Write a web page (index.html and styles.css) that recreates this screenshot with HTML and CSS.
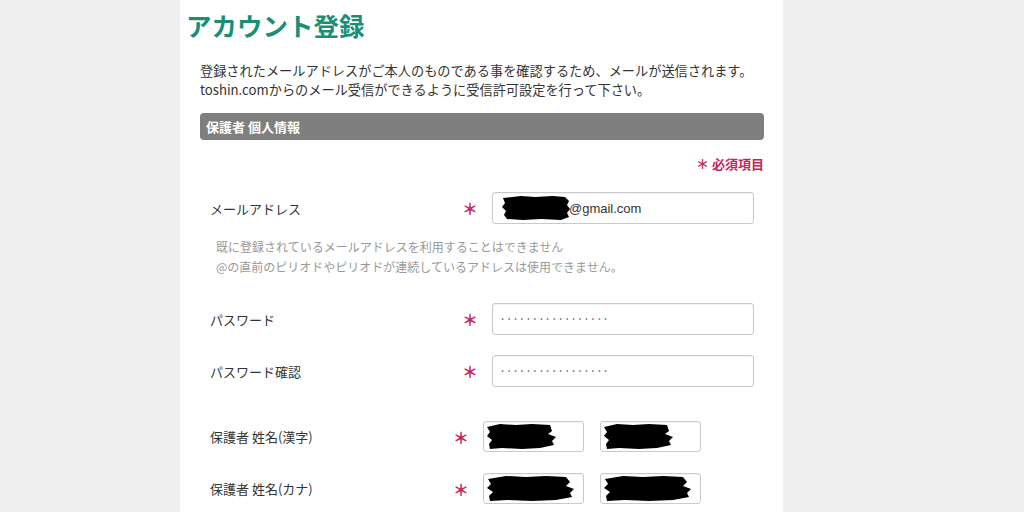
FILE: index.html
```html
<!DOCTYPE html>
<html lang="ja">
<head>
<meta charset="utf-8">
<link rel="stylesheet" href="styles.css">
</head>
<body>
<div class="page">
  <main class="card">
    <h1 class="title">アカウント登録</h1>
    <p class="intro">登録されたメールアドレスがご本人のものである事を確認するため、メールが送信されます。<br>toshin.comからのメール受信ができるように受信許可設定を行って下さい。</p>
    <div class="section-bar">保護者 個人情報</div>
    <div class="required-note">＊ 必須項目</div>

    <div class="row row-wide row-email">
      <div class="label">メールアドレス</div>
      <div class="mark">＊</div>
      <div class="field field-wide">
        <svg class="redact" width="70" height="26" viewBox="0 0 70 26"><path d="M2 3 L20 1 L34 2 L52 1 L64 2 L68 6 L66 10 L69 14 L66 18 L68 22 L60 25 L40 24 L22 25 L6 24 L3 20 L5 16 L1 12 L4 8 Z" fill="#000"/></svg>
        <span class="value">@gmail.com</span>
      </div>
    </div>
    <div class="help">既に登録されているメールアドレスを利用することはできません<br>@の直前のピリオドやピリオドが連続しているアドレスは使用できません。</div>

    <div class="row row-wide row-pass">
      <div class="label">パスワード</div>
      <div class="mark">＊</div>
      <div class="field field-wide"><span class="dots">•••••••••••••••••</span></div>
    </div>

    <div class="row row-wide row-pass2">
      <div class="label">パスワード確認</div>
      <div class="mark">＊</div>
      <div class="field field-wide"><span class="dots">•••••••••••••••••</span></div>
    </div>

    <div class="row row-name row-name1">
      <div class="label">保護者 姓名(漢字)</div>
      <div class="mark">＊</div>
      <div class="field field-half">
        <svg class="redact" width="74" height="27" viewBox="0 0 74 27"><path d="M1 4 L14 1 L30 2 L46 1 L64 2 L66 8 L62 11 L70 14 L66 18 L68 22 L54 25 L36 26 L16 25 L4 26 L3 21 L6 17 L1 13 L4 9 Z" fill="#000"/></svg>
      </div>
      <div class="field field-half">
        <svg class="redact" width="74" height="27" viewBox="0 0 74 27"><path d="M1 4 L14 1 L30 2 L46 1 L64 2 L66 8 L62 11 L70 14 L66 18 L68 22 L54 25 L36 26 L16 25 L4 26 L3 21 L6 17 L1 13 L4 9 Z" fill="#000"/></svg>
      </div>
    </div>

    <div class="row row-name row-name2">
      <div class="label">保護者 姓名(カナ)</div>
      <div class="mark">＊</div>
      <div class="field field-half">
        <svg class="redact" width="90" height="27" viewBox="0 0 90 27"><path d="M2 4 L20 1 L40 2 L60 1 L80 2 L84 7 L80 11 L88 14 L84 18 L86 22 L70 25 L46 26 L22 25 L4 26 L3 21 L7 17 L1 13 L5 9 Z" fill="#000"/></svg>
      </div>
      <div class="field field-half">
        <svg class="redact" width="90" height="27" viewBox="0 0 90 27"><path d="M2 4 L20 1 L40 2 L60 1 L80 2 L84 7 L80 11 L88 14 L84 18 L86 22 L70 25 L46 26 L22 25 L4 26 L3 21 L7 17 L1 13 L5 9 Z" fill="#000"/></svg>
      </div>
    </div>
  </main>
</div>
</body>
</html>
```

FILE: styles.css
```css
* { box-sizing: border-box; }
html, body { margin: 0; padding: 0; }
body {
  background: #efefef;
  font-family: "Noto Sans CJK JP", "Noto Sans", sans-serif;
  color: #333;
  height: 512px;
  overflow: hidden;
}
.page { display: flex; }
.card {
  margin-left: 180px;
  width: 603px;
  min-height: 512px;
  background: #fff;
  padding: 0 19px 0 20px;
}
.title {
  margin: 12px 0 0 -14px;
  font-size: 25.5px;
  line-height: 25px;
  font-weight: 700;
  color: #1b8f74;
}
.intro {
  margin: 24px 0 0;
  font-size: 13.2px;
  line-height: 19px;
  color: #333;
}
.section-bar {
  margin-top: 14px;
  height: 27px;
  background: #7f7f7f;
  border-radius: 4px;
  color: #fff;
  font-size: 13px;
  font-weight: 700;
  line-height: 27px;
  padding-left: 6px;
}
.required-note {
  margin-top: 15px;
  text-align: right;
  font-size: 13px;
  line-height: 18px;
  font-weight: 700;
  color: #c8235a;
}
.row {
  display: flex;
  align-items: center;
  padding-left: 10px;
}
.label {
  font-size: 13px;
  color: #333;
}
.mark {
  width: 30px;
  color: #c8235a;
  font-size: 16px;
  font-weight: 700;
}
.row-wide .label { width: 252px; }
.row-name .label { width: 243px; }
.field {
  height: 32px;
  border: 1px solid #c9c9c9;
  border-radius: 3px;
  background: #fff;
  box-shadow: inset 0 1px 1px rgba(0,0,0,0.05);
  display: flex;
  align-items: center;
  position: relative;
}
.field-wide { width: 262px; padding-left: 8px; }
.field-half { width: 101px; height: 31px; padding-left: 2px; }
.field-half + .field-half { margin-left: 16px; }
.redact { display: block; }
.value {
  font-family: "Liberation Sans", Arial, sans-serif;
  font-size: 13px;
  color: #333;
  margin-left: -2px;
}
.dots {
  font-family: "DejaVu Sans", sans-serif;
  font-size: 5.5px;
  letter-spacing: 3.2px;
  color: #444;
}
.row-email { margin-top: 19px; }
.help {
  margin-top: 13px;
  padding-left: 16px;
  font-size: 12px;
  line-height: 20px;
  color: #999;
}
.row-pass { margin-top: 26px; }
.row-pass2 { margin-top: 20px; }
.row-name1 { margin-top: 34px; }
.row-name2 { margin-top: 21px; }
```
